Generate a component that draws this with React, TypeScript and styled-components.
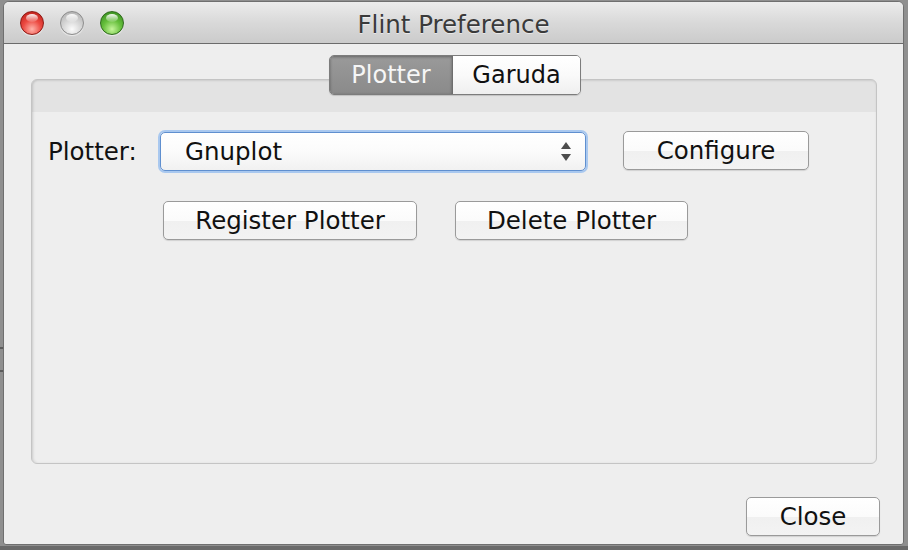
import React from "react";
import styled, { createGlobalStyle } from "styled-components";

const Global = createGlobalStyle`
  html, body { margin: 0; padding: 0; }
  body { background: #8a8a8a; font-family: "DejaVu Sans", "Liberation Sans", sans-serif; }
`;

const Desktop = styled.div`
  width: 908px;
  height: 550px;
  box-sizing: border-box;
  padding: 1px 4px 5px 3px;
  background:
    linear-gradient(#5c5c5c, #5c5c5c) 0 347px / 3px 2px no-repeat,
    linear-gradient(#5c5c5c, #5c5c5c) 0 370px / 3px 2px no-repeat,
    linear-gradient(#6a6a6a, #6a6a6a) 0 546px / 908px 4px no-repeat,
    #8f8f8f;
`;

const Window = styled.div`
  height: 100%;
  box-sizing: border-box;
  border: 1px solid #6f6f6f;
  border-radius: 6px 6px 3px 3px;
  background: #eeeeee;
  display: flex;
  flex-direction: column;
  overflow: hidden;
`;

const TitleBar = styled.div`
  height: 41px;
  flex: none;
  border-bottom: 1px solid #6b6b6b;
  background: linear-gradient(#ececec, #d9d9d9 50%, #cbcbcb);
  display: flex;
  align-items: center;
  position: relative;
`;

const Lights = styled.div`
  display: flex;
  gap: 16px;
  padding-left: 16px;
  padding-top: 1px;
`;

const palettes: Record<string, [string, string, string, string]> = {
  red: ["#ffb3aa", "#ec4a42", "#b51611", "#8e1a15"],
  gray: ["#fbfbfb", "#d6d6d6", "#a9a9a9", "#8d8d8d"],
  green: ["#c6f59b", "#66bf3c", "#2e8219", "#2f6a1d"],
};

const Light = styled.div<{ $c: string }>`
  width: 24px;
  height: 24px;
  box-sizing: border-box;
  border-radius: 50%;
  position: relative;
  border: 1px solid ${(p) => palettes[p.$c][3]};
  background: radial-gradient(
    circle at 50% 78%,
    ${(p) => palettes[p.$c][0]} 0%,
    ${(p) => palettes[p.$c][1]} 45%,
    ${(p) => palettes[p.$c][2]} 100%
  );
  box-shadow: 0 1px 1px rgba(255, 255, 255, 0.6);
  &::before {
    content: "";
    position: absolute;
    left: 5px;
    top: 2px;
    width: 12px;
    height: 8px;
    border-radius: 50%;
    background: linear-gradient(rgba(255, 255, 255, 0.95), rgba(255, 255, 255, 0.1));
  }
`;

const Title = styled.div`
  position: absolute;
  left: 0;
  right: 0;
  top: 8px;
  text-align: center;
  font-size: 24.5px;
  color: #3a3a3a;
  text-shadow: 0 1px 0 rgba(255, 255, 255, 0.5);
  pointer-events: none;
`;

const Body = styled.div`
  flex: 1;
  display: flex;
  flex-direction: column;
  padding: 11px 26px 0 27px;
`;

const TabBar = styled.div`
  align-self: center;
  display: flex;
  height: 40px;
  box-sizing: border-box;
  margin-bottom: -16px;
  position: relative;
  z-index: 1;
  margin-left: 2px;
  border: 1px solid #7c7c7c;
  border-radius: 5px;
  overflow: hidden;
  box-shadow: 0 1px 1px rgba(0, 0, 0, 0.15);
`;

const Tab = styled.div<{ $active?: boolean; $w: number }>`
  width: ${(p) => p.$w}px;
  box-sizing: border-box;
  display: flex;
  align-items: center;
  justify-content: center;
  font-size: 24px;
  color: ${(p) => (p.$active ? "#f6f6f6" : "#111")};
  background: ${(p) =>
    p.$active
      ? "linear-gradient(#9a9a9a, #8a8a8a)"
      : "linear-gradient(#ffffff, #fafafa 50%, #efefef)"};
  box-shadow: ${(p) => (p.$active ? "inset 0 1px 3px rgba(0,0,0,0.35)" : "none")};
  & + & {
    border-left: 1px solid #6e6e6e;
  }
`;

const Panel = styled.div`
  height: 385px;
  flex: none;
  box-sizing: border-box;
  border: 1px solid #c4c4c4;
  border-radius: 6px;
  background: linear-gradient(#e3e3e3 0, #e3e3e3 32px, #eeeeee 32px);
  box-shadow: inset 2px 0 3px -1px rgba(0, 0, 0, 0.12), inset 0 1px 2px rgba(0, 0, 0, 0.08);
  padding: 52px 16px 0 16px;
`;

const Row = styled.div<{ $indent?: number; $top?: number }>`
  display: flex;
  align-items: flex-start;
  margin-left: ${(p) => p.$indent ?? 0}px;
  margin-top: ${(p) => p.$top ?? 0}px;
`;

const Label = styled.div`
  font-size: 24.5px;
  color: #111;
  height: 39px;
  line-height: 39px;
  width: 112px;
`;

const Combo = styled.div`
  width: 426px;
  height: 39px;
  box-sizing: border-box;
  border: 1px solid #5f8fcf;
  border-radius: 5px;
  box-shadow: 0 0 0 2px #a9c8ef;
  background: linear-gradient(#ffffff, #fbfbfb 50%, #f1f1f1);
  display: flex;
  align-items: center;
  justify-content: space-between;
  padding: 0 13px 0 24px;
  font-size: 24.5px;
  color: #111;
`;

const Button = styled.div<{ $w: number; $left?: number; $up?: boolean }>`
  width: ${(p) => p.$w}px;
  height: 39px;
  box-sizing: border-box;
  margin-left: ${(p) => p.$left ?? 0}px;
  margin-top: ${(p) => (p.$up ? -1 : 0)}px;
  border: 1px solid #9a9a9a;
  border-radius: 5px;
  background: linear-gradient(#ffffff, #fbfbfb 50%, #f0f0f0 52%, #f3f3f3);
  box-shadow: 0 1px 1px rgba(0, 0, 0, 0.12);
  display: flex;
  align-items: center;
  justify-content: center;
  font-size: 24.5px;
  color: #111;
`;

const Footer = styled.div`
  display: flex;
  justify-content: flex-end;
  padding-top: 33px;
  margin-right: -3px;
`;

const Arrows = () => (
  <svg width="12" height="22" viewBox="0 0 12 22">
    <path d="M6 1 L11 8 L1 8 Z" fill="#4d4d4d" />
    <path d="M1 13 L11 13 L6 20 Z" fill="#4d4d4d" />
  </svg>
);

export default function App() {
  return (
    <>
      <Global />
      <Desktop>
        <Window>
          <TitleBar>
            <Lights>
              <Light $c="red" />
              <Light $c="gray" />
              <Light $c="green" />
            </Lights>
            <Title>Flint Preference</Title>
          </TitleBar>
          <Body>
            <TabBar>
              <Tab $active $w={122}>Plotter</Tab>
              <Tab $w={128}>Garuda</Tab>
            </TabBar>
            <Panel>
              <Row>
                <Label>Plotter:</Label>
                <Combo>
                  <span>Gnuplot</span>
                  <Arrows />
                </Combo>
                <Button $w={186} $left={37} $up>Configure</Button>
              </Row>
              <Row $indent={115} $top={30}>
                <Button $w={254}>Register Plotter</Button>
                <Button $w={233} $left={38}>Delete Plotter</Button>
              </Row>
            </Panel>
            <Footer>
              <Button $w={134}>Close</Button>
            </Footer>
          </Body>
        </Window>
      </Desktop>
    </>
  );
}
